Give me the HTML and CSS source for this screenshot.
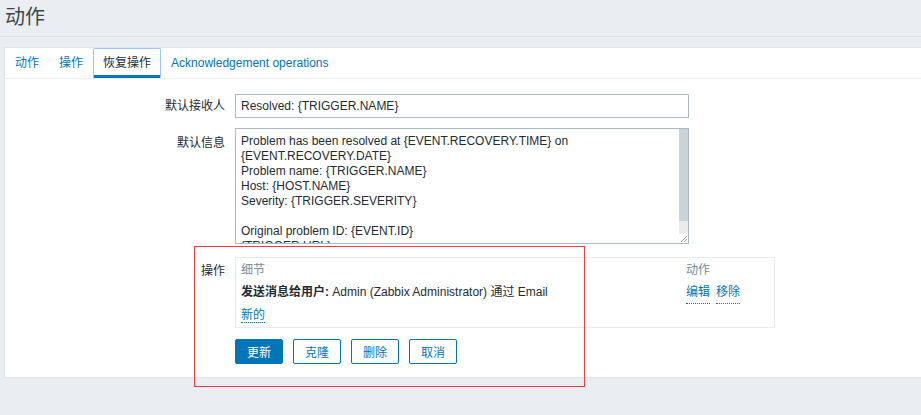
FILE: index.html
```html
<!DOCTYPE html>
<html lang="zh-CN">
<head>
    <meta charset="UTF-8">
    <meta name="viewport" content="width=device-width, initial-scale=1.0">
    <title>动作</title>
    <link rel="stylesheet" href="styles.css">
</head>
<body>
    <div class="header">
        <h1>动作</h1>
    </div>
    <div class="panel">
        <ul class="tabs">
            <li><a href="#">动作</a></li>
            <li><a href="#">操作</a></li>
            <li class="active"><a href="#">恢复操作</a></li>
            <li><a href="#">Acknowledgement operations</a></li>
        </ul>
        <div class="form">
            <label class="label label-mid" for="subject">默认接收人</label>
            <div class="field">
                <input type="text" id="subject" value="Resolved: {TRIGGER.NAME}">
            </div>

            <label class="label" for="message">默认信息</label>
            <div class="field">
                <div class="textbox">
                    <textarea id="message">Problem has been resolved at {EVENT.RECOVERY.TIME} on {EVENT.RECOVERY.DATE}
Problem name: {TRIGGER.NAME}
Host: {HOST.NAME}
Severity: {TRIGGER.SEVERITY}

Original problem ID: {EVENT.ID}
{TRIGGER.URL}</textarea>
                    <div class="scrollbar">
                        <div class="thumb"></div>
                        <div class="track"></div>
                        <div class="grip">
                            <svg width="9" height="9" viewBox="0 0 9 9">
                                <path d="M2 8 L8 2 M5 8 L8 5" stroke="#8c969b" stroke-width="1" fill="none"/>
                            </svg>
                        </div>
                    </div>
                </div>
            </div>

            <div class="label label-ops">操作</div>
            <div class="field">
                <div class="ops">
                    <div class="ops-row ops-head">
                        <div class="ops-details">细节</div>
                        <div class="ops-actions">动作</div>
                    </div>
                    <div class="ops-row">
                        <div class="ops-details"><b>发送消息给用户:</b> Admin (Zabbix Administrator) 通过 Email</div>
                        <div class="ops-actions">
                            <a href="#" class="link">编辑</a>
                            <a href="#" class="link">移除</a>
                        </div>
                    </div>
                    <div class="ops-row">
                        <div class="ops-details"><a href="#" class="link">新的</a></div>
                    </div>
                </div>
                <div class="buttons">
                    <button class="btn btn-main">更新</button>
                    <button class="btn">克隆</button>
                    <button class="btn">删除</button>
                    <button class="btn">取消</button>
                </div>
            </div>
        </div>
    </div>
    <div class="highlight"></div>
</body>
</html>
```

FILE: styles.css
```css
body {
    margin: 0;
    background: #ebeef0;
    font-family: "Liberation Sans", Arial, "Noto Sans CJK SC", sans-serif;
    font-size: 12px;
    color: #1f2c33;
}
.header {
    margin: 0 0 10px 0;
    height: 36px;
    border-bottom: 1px solid #dde2e6;
}
.header h1 {
    margin: 0;
    padding: 4px 0 0 5px;
    font-size: 20px;
    font-weight: normal;
    line-height: 26px;
    color: #3b4850;
}
.panel {
    margin-left: 4px;
    background: #fff;
    border: 1px solid #dfe4e7;
    border-right: none;
    padding-bottom: 13px;
}
.tabs {
    list-style: none;
    margin: 0;
    padding: 0;
    display: flex;
    height: 30px;
    border-bottom: 1px solid #ebeef0;
}
.tabs li {
    border: 1px solid transparent;
    border-bottom: none;
}
.tabs a {
    display: block;
    padding: 0 9px;
    line-height: 29px;
    color: #0275b8;
    text-decoration: none;
}
.tabs li.active {
    border-color: #9fc3f3;
    border-radius: 2px 2px 0 0;
    box-shadow: inset 0 -3px 0 #0275b8;
}
.tabs li.active a {
    color: #1f2c33;
}
.form {
    display: grid;
    grid-template-columns: 220px 1fr;
    column-gap: 10px;
    row-gap: 10px;
    padding-top: 15px;
}
.label {
    text-align: right;
    padding-top: 5px;
}
.label-mid {
    line-height: 24px;
    padding-top: 0;
}
.label-ops {
    padding-top: 7px;
}
input, textarea {
    font-family: inherit;
    font-size: 12px;
    color: #1f2c33;
    box-sizing: border-box;
    outline: none;
    margin: 0;
}
input {
    width: 454px;
    height: 24px;
    padding: 0 5px;
    border: 1px solid #acbbc2;
}
.textbox {
    display: flex;
    width: 454px;
    height: 116px;
    box-sizing: border-box;
    border: 1px solid #acbbc2;
}
textarea {
    flex: 1;
    display: block;
    border: none;
    resize: none;
    padding: 5px 5px 0;
    line-height: 15px;
    overflow: hidden;
}
.scrollbar {
    width: 9px;
    display: flex;
    flex-direction: column;
}
.thumb {
    height: 92px;
    background: #c9d4d9;
}
.track {
    flex: 1;
    background: #ebebeb;
}
.grip {
    height: 9px;
    background: #fff;
}
.grip svg {
    display: block;
}
.ops {
    margin-top: 3px;
    width: 540px;
    box-sizing: border-box;
    border: 1px solid #e8ebed;
    padding: 1px 5px 1px;
}
.ops-row {
    display: flex;
    line-height: 22px;
}
.ops-head {
    color: #768d99;
}
.ops-details {
    width: 445px;
}
.ops-actions {
    display: flex;
    gap: 6px;
}
.link {
    color: #0275b8;
    text-decoration: none;
    border-bottom: 1px dotted #0275b8;
}
.buttons {
    display: flex;
    gap: 10px;
    margin-top: 11px;
}
.btn {
    width: 48px;
    height: 25px;
    font-family: inherit;
    font-size: 12px;
    color: #0275b8;
    background: #fff;
    border: 1px solid #0275b8;
    border-radius: 2px;
    padding: 0;
}
.btn-main {
    background: #0275b8;
    color: #fff;
}
.highlight {
    position: absolute;
    left: 194px;
    top: 246px;
    width: 389px;
    height: 139px;
    border: 1px solid #f03c3e;
}
```
